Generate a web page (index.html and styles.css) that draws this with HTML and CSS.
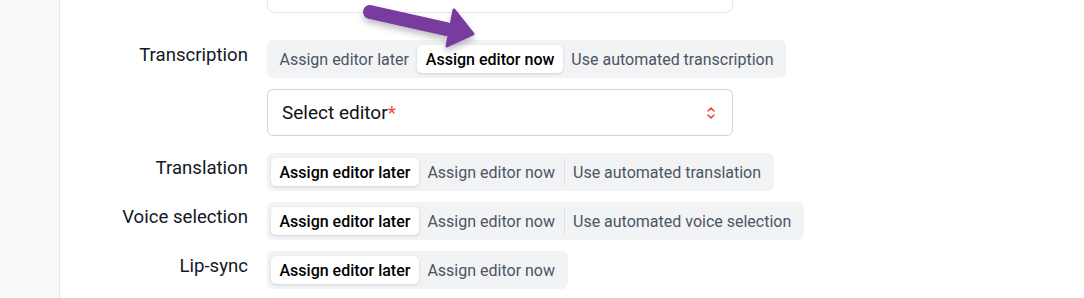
FILE: index.html
```html
<!DOCTYPE html>
<html lang="en">
<head>
  <meta charset="UTF-8" />
  <title>Workflow settings</title>
  <link rel="stylesheet" href="styles.css">
</head>
<body>
  <aside class="sidebar"></aside>

  <main class="content">
    <div class="form">
      <div class="label"></div>
      <div class="prev-field"></div>

      <div class="label row-first">Transcription</div>
      <div class="field row-first">
        <div class="segmented">
          <button class="seg">Assign editor later</button>
          <button class="seg active">Assign editor now</button>
          <button class="seg">Use automated transcription</button>
        </div>
        <div class="select">
          <span>Select editor<span class="req">*</span></span>
          <svg class="chevrons" width="10" height="14" viewBox="0 0 10 14">
            <path d="M2 5 L5 2 L8 5 M2 9 L5 12 L8 9" fill="none" stroke="#ef4444" stroke-width="1.6" stroke-linecap="round" stroke-linejoin="round"/>
          </svg>
        </div>
      </div>

      <div class="label row-gap">Translation</div>
      <div class="field row-gap">
        <div class="segmented">
          <button class="seg active">Assign editor later</button>
          <button class="seg">Assign editor now</button>
          <span class="divider"></span>
          <button class="seg">Use automated translation</button>
        </div>
      </div>

      <div class="label">Voice selection</div>
      <div class="field">
        <div class="segmented">
          <button class="seg active">Assign editor later</button>
          <button class="seg">Assign editor now</button>
          <span class="divider"></span>
          <button class="seg">Use automated voice selection</button>
        </div>
      </div>

      <div class="label">Lip-sync</div>
      <div class="field">
        <div class="segmented">
          <button class="seg active">Assign editor later</button>
          <button class="seg">Assign editor now</button>
        </div>
      </div>
    </div>

    <!-- annotation arrow drawn over the form -->
    <svg class="arrow" width="140" height="70" viewBox="0 0 140 70">
      <defs>
        <filter id="arrowShadow" x="-20%" y="-40%" width="140%" height="200%">
          <feDropShadow dx="0" dy="4" stdDeviation="3" flood-color="#000" flood-opacity="0.25"/>
        </filter>
      </defs>
      <g filter="url(#arrowShadow)" fill="#7a3a9e" stroke="#7a3a9e">
        <line x1="20" y1="13" x2="96" y2="30" stroke-width="14" stroke-linecap="round"/>
        <polygon points="104,11 123,35 97,47" stroke-width="3" stroke-linejoin="round"/>
      </g>
    </svg>
  </main>
</body>
</html>
```

FILE: styles.css
```css
body {
  margin: 0;
  display: flex;
  min-height: 100vh;
  font-family: Roboto, "Noto Sans", sans-serif;
  color: #111827;
  background: #fff;
}

.sidebar {
  width: 59px;
  flex-shrink: 0;
  background: #f8f9fb;
  border-right: 1px solid #e5e7eb;
}

.content {
  flex: 1;
  position: relative;
}

.form {
  display: grid;
  grid-template-columns: 188px 466px;
  column-gap: 19px;
  row-gap: 11px;
  align-items: start;
}

.label {
  font-size: 18.6px;
  line-height: 21px;
  padding-top: 5px;
  text-align: right;
  color: #111827;
}

.prev-field {
  height: 12px;
  border: 1px solid #e5e7eb;
  border-top: none;
  border-radius: 0 0 8px 8px;
}

.row-first {
  margin-top: 16px;
}

.row-gap {
  margin-top: 6px;
}

.field {
  display: flex;
  flex-direction: column;
  align-items: flex-start;
  gap: 11px;
}

.segmented {
  display: flex;
  align-items: center;
  padding: 5px 4px;
  background: #f2f3f5;
  border-radius: 6px;
  white-space: nowrap;
}

.seg {
  height: 28px;
  padding: 0 8.5px;
  border: none;
  background: transparent;
  border-radius: 5px;
  font-family: inherit;
  font-size: 16px;
  font-weight: 400;
  color: #4b5563;
  cursor: pointer;
}

.seg.active {
  background: #fff;
  color: #000;
  font-weight: 500;
  box-shadow: 0 1px 3px rgba(0, 0, 0, 0.14);
}

.divider {
  width: 1px;
  height: 26px;
  background: #dcdfe3;
}

.select {
  box-sizing: border-box;
  width: 466px;
  height: 47px;
  padding: 0 14px;
  display: flex;
  align-items: center;
  justify-content: space-between;
  border: 1px solid #d1d5db;
  border-radius: 6px;
  font-size: 19px;
  color: #111;
}

.req {
  color: #ef4444;
}

.chevrons {
  margin-right: 2px;
}

.arrow {
  position: absolute;
  left: 290px;
  top: -1px;
  pointer-events: none;
}
```
